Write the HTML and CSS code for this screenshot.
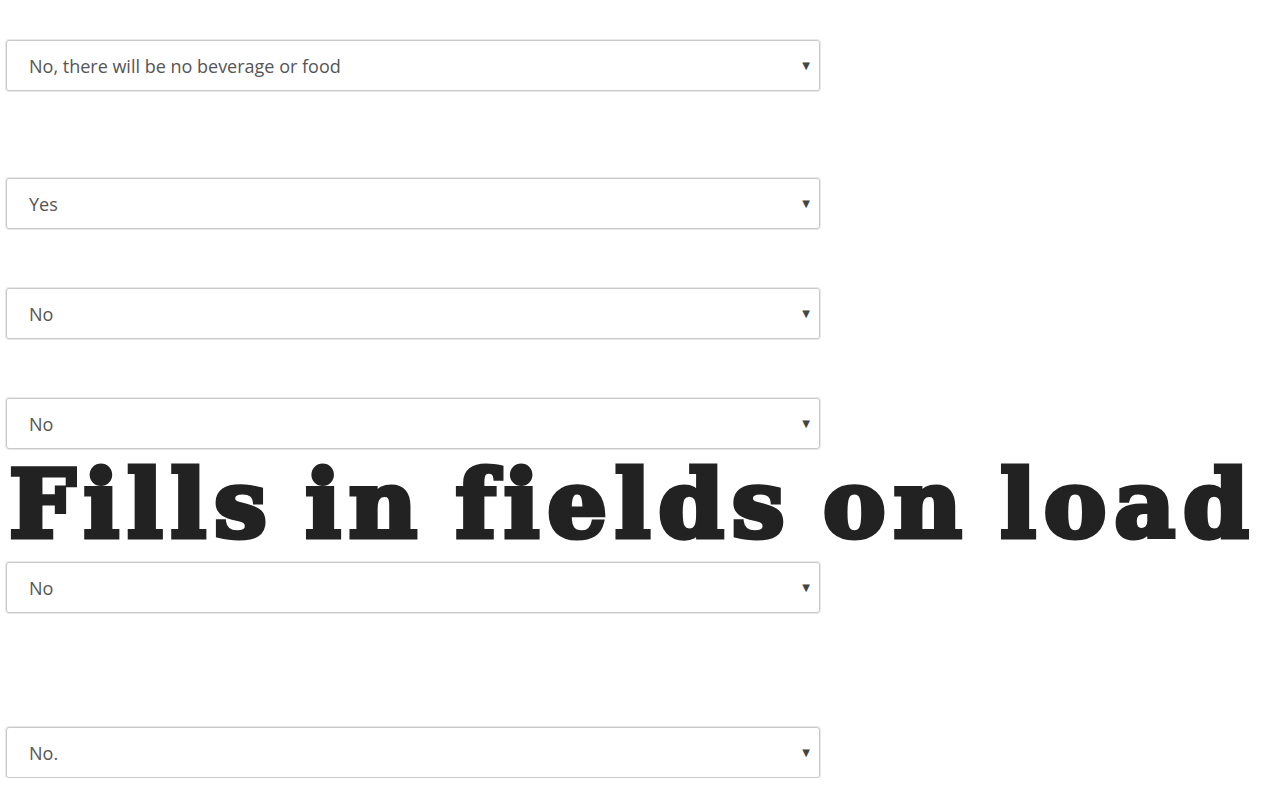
FILE: index.html
```html
<!DOCTYPE html>
<html lang="en">
<head>
<meta charset="utf-8">
<title>Fills in fields on load</title>
<link rel="stylesheet" href="styles.css">
</head>
<body>
<main class="form">
  <div class="field field-1"><div class="select"><span class="value">No, there will be no beverage or food</span><span class="arrow">▼</span></div></div>
  <div class="field field-2"><div class="select"><span class="value">Yes</span><span class="arrow">▼</span></div></div>
  <div class="field field-3"><div class="select"><span class="value">No</span><span class="arrow">▼</span></div></div>
  <div class="field field-4"><div class="select"><span class="value">No</span><span class="arrow">▼</span></div></div>
  <h1 class="headline">Fills in fields on load</h1>
  <div class="field field-5"><div class="select"><span class="value">No</span><span class="arrow">▼</span></div></div>
  <div class="field field-6"><div class="select"><span class="value">No.</span><span class="arrow">▼</span></div></div>
</main>
</body>
</html>
```
FILE: styles.css
```css
html, body {
  margin: 0;
  padding: 0;
  background: #ffffff;
}
.form {
  display: flex;
  flex-direction: column;
  padding: 40px 0 0 6px;
}
.field { width: 814px; }
.field-2 { margin-top: 87px; }
.field-3 { margin-top: 59px; }
.field-4 { margin-top: 59px; }
.field-5 { margin-top: 0; }
.field-6 { margin-top: 114px; }
.select {
  box-sizing: border-box;
  height: 51px;
  display: flex;
  align-items: center;
  justify-content: space-between;
  padding: 0 9px 0 22px;
  border: 1px solid #c9c9c9;
  border-radius: 3px;
  box-shadow: 0 0 0 1px #e8e8e8;
  font-family: "Open Sans", sans-serif;
  font-size: 18px;
  color: #555555;
}
.arrow {
  font-size: 10px;
  color: #444444;
  font-family: "DejaVu Sans", sans-serif;
}
.headline {
  margin: 0;
  height: 113px;
  box-sizing: border-box;
  padding: 0 0 0 3px;
  font-family: "DejaVu Serif", serif;
  font-weight: 900;
  font-size: 94px;
  line-height: 110px;
  color: #222222;
  white-space: nowrap;
  font-variant-ligatures: none;
  letter-spacing: 7.8px;
  word-spacing: -10px;
  -webkit-text-stroke: 5px #222222;
}
```
